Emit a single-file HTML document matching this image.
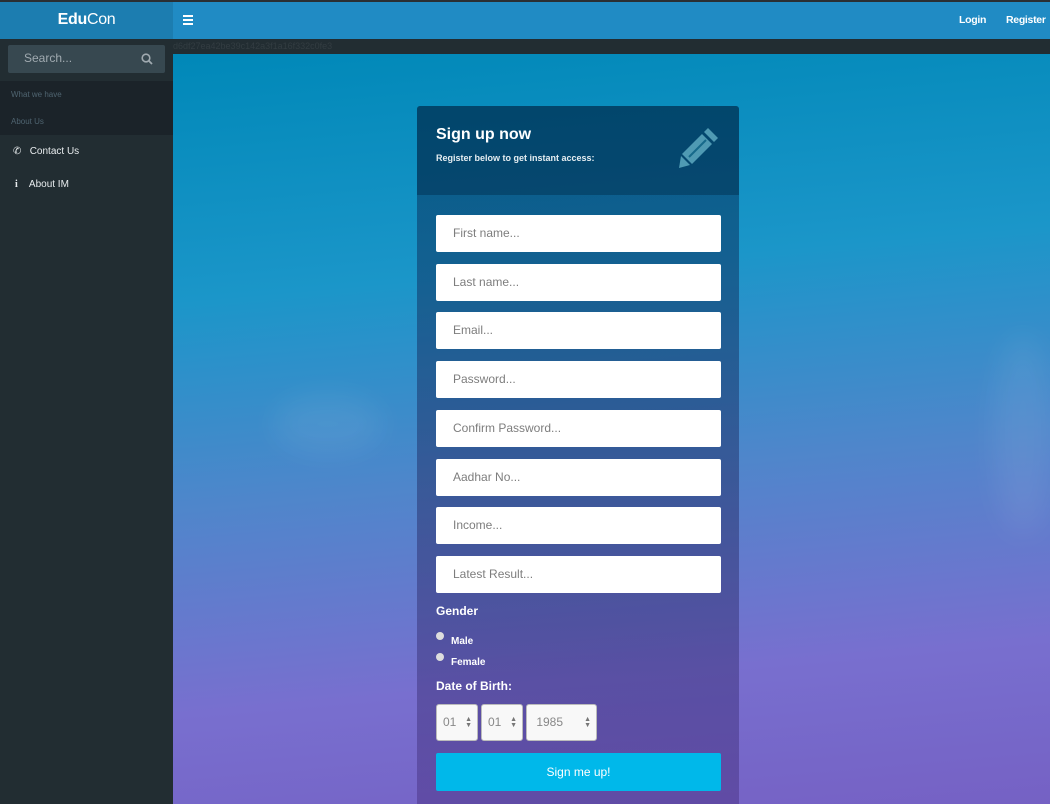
<!DOCTYPE html>
<html><head><meta charset="utf-8"><style>
*{box-sizing:border-box;margin:0;padding:0}
body{width:1050px;height:804px;overflow:hidden;font-family:"Liberation Sans",sans-serif;background:#222d32;position:relative}
.top{position:absolute;left:0;top:0;width:1050px;height:39px;border-top:2px solid #2a2f33;background:#208bc4}
.logo{position:absolute;left:0;top:0;width:173px;height:37px;background:#1c7db0;color:#fff;font-size:16px;text-align:center;line-height:36px;letter-spacing:-0.3px}
.ham{position:absolute;left:183px;top:13px;width:10px}
.ham i{display:block;height:2px;background:#fff;margin-bottom:2px}
.nav{position:absolute;top:12px;color:#fff;font-size:10.5px;font-weight:bold;letter-spacing:-0.3px}
.strip{position:absolute;left:173px;top:39px;width:877px;height:15px;background:#222d32;color:#333d42;font-size:9px;line-height:14px}
.side{position:absolute;left:0;top:39px;width:173px;height:765px;background:#222d32}
.search{position:absolute;left:8px;top:6px;width:157px;height:28px;background:#374850;border-radius:2px;color:#a0aab0;font-size:12px;line-height:27px;padding-left:16px}
.dk{position:absolute;left:0;top:42px;width:173px;height:54px;background:#1b2329}
.dk div{color:#4f6470;font-size:8px;padding-left:11px;height:27px;line-height:27px}
.mi{position:absolute;left:0;color:#e8ecee;font-size:10px}
.main{position:absolute;left:173px;top:54px;width:877px;height:750px;background:linear-gradient(175deg,#0088b8 0%,#1b96c9 30%,#4f86cb 55%,#786fcf 80%,#7561c4 100%);overflow:hidden}
.blob{position:absolute;border-radius:50%;filter:blur(14px);background:rgba(255,255,255,.07)}
.panel{position:absolute;left:417px;top:106px;width:322px;height:698px;background:linear-gradient(180deg,rgba(0,60,100,.6),rgba(40,45,105,.5) 60%,rgba(70,45,125,.45));border-radius:3px 3px 0 0}
.ph{height:89px;background:rgba(0,45,75,.45);border-radius:3px 3px 0 0;position:relative}
.ph h1{position:absolute;left:19px;top:20px;color:#fff;font-size:16px;font-weight:bold}
.ph p{position:absolute;left:19px;top:47px;color:#e6eef2;font-size:9px;font-weight:bold}
.f{position:absolute;left:19px;width:285px;height:37px;background:#fff;border-radius:2px;color:#7d7d7d;font-size:12px;line-height:37px;padding-left:17px}
.lbl{position:absolute;left:19px;color:#fff;font-size:12px;font-weight:bold}
.rad{position:absolute;left:19px;color:#fff;font-size:10px;font-weight:bold}
.rad i{display:inline-block;width:8px;height:8px;border-radius:50%;background:#ddd;margin-right:7px;vertical-align:4px}
.sel{position:absolute;top:598px;height:37px;background:#f8f8f8;border:1px solid #bbb;border-radius:3px;color:#888;font-size:12px;line-height:35px;padding-left:6px}
.sel b{position:absolute;right:5px;top:12px;font-size:7px;line-height:6px;color:#777}
.btn{position:absolute;left:19px;top:647px;width:285px;height:38px;background:#00b8ea;border-radius:2px;color:#fff;font-size:12px;text-align:center;line-height:38px}
</style></head><body>
<div class="top">
<div class="logo"><b>Edu</b>Con</div>
<div class="ham"><i></i><i></i><i></i></div>
<div class="nav" style="left:959px">Login</div>
<div class="nav" style="left:1006px">Register</div>
</div>
<div class="side">
<div class="search">Search...<svg style="position:absolute;right:12px;top:8px" width="12" height="12" viewBox="0 0 12 12"><circle cx="5" cy="5" r="3.8" fill="none" stroke="#a0aab0" stroke-width="1.6"/><path d="M8 8l3 3" stroke="#a0aab0" stroke-width="1.8"/></svg></div>
<div class="dk"><div>What we have</div><div>About Us</div></div>
<div class="mi" style="top:107px;left:13px">✆&nbsp;&nbsp;&nbsp;Contact Us</div>
<div class="mi" style="top:140px;left:15px"><b style="font-family:'Liberation Serif',serif">i</b>&nbsp;&nbsp;&nbsp;&nbsp;About IM</div>
</div>
<div class="strip">d6df27ea42be39c142a3f1a16f332c0fe3</div>
<div class="main">
<div class="blob" style="left:100px;top:340px;width:110px;height:60px"></div>
<div class="blob" style="left:820px;top:280px;width:60px;height:200px"></div>
</div>
<div class="panel">
<div class="ph"><h1>Sign up now</h1><p>Register below to get instant access:</p>
<svg style="position:absolute;left:261px;top:20px" width="42" height="42" viewBox="0 0 42 42"><g fill="#4f9ab3"><path d="M30 2l10 10-4 4-10-10z"/><path d="M24 8l10 10-20 20-10-10z"/><path d="M3 30l9 9-11 3z"/></g><path d="M11 31l17-17" stroke="#16698a" stroke-width="2"/></svg></div>
<div class="f" style="top:109px">First name...</div>
<div class="f" style="top:158px">Last name...</div>
<div class="f" style="top:206px">Email...</div>
<div class="f" style="top:255px">Password...</div>
<div class="f" style="top:304px">Confirm Password...</div>
<div class="f" style="top:353px">Aadhar No...</div>
<div class="f" style="top:401px">Income...</div>
<div class="f" style="top:450px">Latest Result...</div>
<div class="lbl" style="top:498px">Gender</div>
<div class="rad" style="top:526px"><i></i>Male</div>
<div class="rad" style="top:547px"><i></i>Female</div>
<div class="lbl" style="top:573px">Date of Birth:</div>
<div class="sel" style="left:19px;width:42px">01<b>▲<br>▼</b></div>
<div class="sel" style="left:64px;width:42px">01<b>▲<br>▼</b></div>
<div class="sel" style="left:109px;width:71px">&nbsp;1985<b>▲<br>▼</b></div>
<div class="btn">Sign me up!</div>
</div>
</body></html>
